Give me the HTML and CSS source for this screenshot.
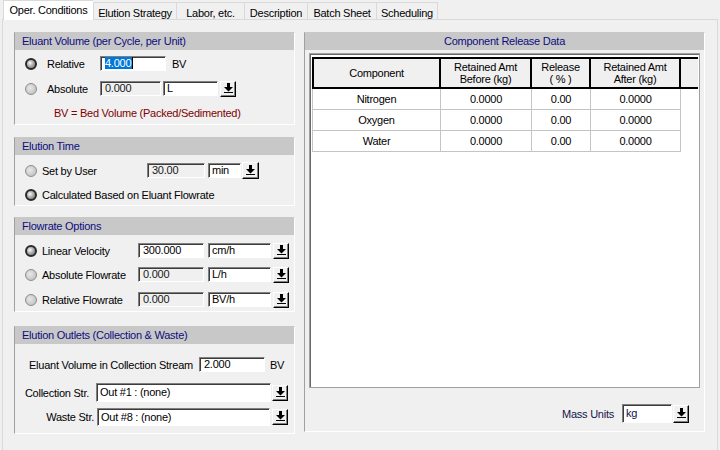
FILE: index.html
```html
<!DOCTYPE html>
<html>
<head>
<meta charset="utf-8">
<link rel="stylesheet" href="styles.css">
</head>
<body>
<div class="tabs">
  <div class="tab active t0">Oper. Conditions</div>
  <div class="tab first t1">Elution Strategy</div>
  <div class="tab t2">Labor, etc.</div>
  <div class="tab t3">Description</div>
  <div class="tab t4">Batch Sheet</div>
  <div class="tab t5">Scheduling</div>
</div>
<div class="page">
  <div class="leftcol">
    <section class="panel p1">
      <div class="ph">Eluant Volume (per Cycle, per Unit)</div>
      <div class="row p1r1">
        <span class="radio on"></span><span class="lbl l1">Relative</span>
        <span class="tb w66"><span class="hl">4.000</span></span><span class="unit">BV</span>
      </div>
      <div class="row p1r2">
        <span class="radio"></span><span class="lbl l1">Absolute</span>
        <span class="tb dis w61">0.000</span><span class="cb w55 m2">L</span>
        <span class="btn m2"><svg viewBox="0 0 9 10" width="9" height="10"><path d="M3 0h3v4h3L4.5 8.5 0 4h3z"/><rect x="0" y="9" width="9" height="1.2"/></svg></span>
      </div>
      <div class="note">BV = Bed Volume (Packed/Sedimented)</div>
    </section>

    <section class="panel p2">
      <div class="ph">Elution Time</div>
      <div class="row p2r1">
        <span class="radio"></span><span class="lbl l2">Set by User</span>
        <span class="tb dis w58">30.00</span><span class="cb w33 m3">min</span>
        <span class="btn b17 m1"><svg viewBox="0 0 9 10" width="9" height="10"><path d="M3 0h3v4h3L4.5 8.5 0 4h3z"/><rect x="0" y="9" width="9" height="1.2"/></svg></span>
      </div>
      <div class="row p2r2">
        <span class="radio on"></span><span class="lbl l2b">Calculated Based on Eluant Flowrate</span>
      </div>
    </section>

    <section class="panel p3">
      <div class="ph">Flowrate Options</div>
      <div class="row p3r1">
        <span class="radio on"></span><span class="lbl l3">Linear Velocity</span>
        <span class="tb w66">300.000</span><span class="cb w63 m4">cm/h</span>
        <span class="btn m2"><svg viewBox="0 0 9 10" width="9" height="10"><path d="M3 0h3v4h3L4.5 8.5 0 4h3z"/><rect x="0" y="9" width="9" height="1.2"/></svg></span>
      </div>
      <div class="row p3r2">
        <span class="radio"></span><span class="lbl l3">Absolute Flowrate</span>
        <span class="tb dis w66">0.000</span><span class="cb w63 m4">L/h</span>
        <span class="btn m2"><svg viewBox="0 0 9 10" width="9" height="10"><path d="M3 0h3v4h3L4.5 8.5 0 4h3z"/><rect x="0" y="9" width="9" height="1.2"/></svg></span>
      </div>
      <div class="row p3r3">
        <span class="radio"></span><span class="lbl l3">Relative Flowrate</span>
        <span class="tb dis w66">0.000</span><span class="cb w63 m4">BV/h</span>
        <span class="btn m2"><svg viewBox="0 0 9 10" width="9" height="10"><path d="M3 0h3v4h3L4.5 8.5 0 4h3z"/><rect x="0" y="9" width="9" height="1.2"/></svg></span>
      </div>
    </section>

    <section class="panel p4">
      <div class="ph">Elution Outlets (Collection &amp; Waste)</div>
      <div class="row p4r1">
        <span class="lbl l4">Eluant Volume in Collection Stream</span>
        <span class="tb w66">2.000</span><span class="unit u5">BV</span>
      </div>
      <div class="row p4r2">
        <span class="lbl l5">Collection Str.</span>
        <span class="cb tall w175">Out #1 : (none)</span>
        <span class="btn m1"><svg viewBox="0 0 9 10" width="9" height="10"><path d="M3 0h3v4h3L4.5 8.5 0 4h3z"/><rect x="0" y="9" width="9" height="1.2"/></svg></span>
      </div>
      <div class="row p4r3">
        <span class="lbl l6">Waste Str.</span>
        <span class="cb tall2 w173">Out #8 : (none)</span>
        <span class="btn m2"><svg viewBox="0 0 9 10" width="9" height="10"><path d="M3 0h3v4h3L4.5 8.5 0 4h3z"/><rect x="0" y="9" width="9" height="1.2"/></svg></span>
      </div>
    </section>
  </div>

  <section class="panel rp">
    <div class="ph center">Component Release Data</div>
    <div class="gridbox">
      <table class="grid">
        <colgroup><col class="c1"><col class="c2"><col class="c3"><col class="c4"><col class="c5"></colgroup>
        <thead>
          <tr>
            <th class="first">Component</th>
            <th>Retained Amt<br>Before (kg)</th>
            <th>Release<br>( % )</th>
            <th>Retained Amt<br>After (kg)</th>
            <th class="x"></th>
          </tr>
        </thead>
        <tbody>
          <tr><td class="first">Nitrogen</td><td>0.0000</td><td>0.00</td><td>0.0000</td><td class="x"></td></tr>
          <tr><td class="first">Oxygen</td><td>0.0000</td><td>0.00</td><td>0.0000</td><td class="x"></td></tr>
          <tr><td class="first">Water</td><td>0.0000</td><td>0.00</td><td>0.0000</td><td class="x"></td></tr>
        </tbody>
      </table>
    </div>
    <div class="massrow">
      <span class="mlbl">Mass Units</span>
      <span class="cb tall w50 kg">kg</span>
      <span class="btn bm m1"><svg viewBox="0 0 9 10" width="9" height="10"><path d="M3 0h3v4h3L4.5 8.5 0 4h3z"/><rect x="0" y="9" width="9" height="1.2"/></svg></span>
    </div>
  </section>
</div>
</body>
</html>
```

FILE: styles.css
```css
* { box-sizing: border-box; }

body {
  margin: 0;
  width: 720px;
  height: 450px;
  overflow: hidden;
  background: #f0f0f0;
  font-family: "Liberation Sans", Arial, sans-serif;
  font-size: 11px;
  letter-spacing: -0.25px;
  color: #000;
}

/* ---------- tabs ---------- */
.tabs {
  display: flex;
  align-items: flex-end;
  height: 19px;
  padding-left: 3px;
  position: relative;
  z-index: 1;
}
.tab {
  height: 17px;
  border-top: 1px solid #d9d9d9;
  border-right: 1px solid #d9d9d9;
  background: #f0f0f0;
  display: flex;
  justify-content: center;
  align-items: center;
  padding-top: 3px;
  white-space: nowrap;
}
.tab.active {
  align-self: flex-start;
  height: 20px;
  margin-bottom: -1px;
  background: #fff;
  border-left: 1px solid #d9d9d9;
  border-right: none;
  padding-top: 0;
  padding-bottom: 1px;
}
.tab.first { border-left: 1px solid #d9d9d9; }
.t0 { width: 90px; }
.t1 { width: 84px; }
.t2 { width: 68px; }
.t3 { width: 63px; }
.t4 { width: 69px; }
.t5 { width: 61px; }

/* ---------- page ---------- */
.page {
  margin-left: 2px;
  width: 716px;
  height: 431px;
  border: 1px solid #d9d9d9;
  border-bottom: none;
  padding: 12px 0 0 11px;
  display: flex;
  align-items: flex-start;
  gap: 9px;
}
.leftcol {
  width: 281px;
  display: flex;
  flex-direction: column;
}

.panel {
  border: 1px solid;
  border-color: #c8c8c8 #fff #fff #a0a0a0;
}
.p1 { height: 93px; }
.p2 { height: 69px; margin-top: 12px; }
.p3 { height: 95px; margin-top: 11px; }
.p4 { height: 108px; margin-top: 14px; }

.ph {
  height: 17px;
  line-height: 17px;
  background: #c8c8c8;
  color: #0c0c80;
  padding-left: 7px;
  white-space: nowrap;
}
.ph.center { text-align: center; padding-left: 0; }

.row {
  display: flex;
  align-items: center;
  height: 17px;
  padding-left: 10px;
  white-space: nowrap;
}
.p1r1 { margin-top: 5px; }
.p1r2 { margin-top: 8px; }
.p2r1 { margin-top: 7px; }
.p2r2 { margin-top: 7px; }
.p3r1 { margin-top: 7px; }
.p3r2 { margin-top: 7px; }
.p3r3 { margin-top: 8px; }
.p4r1 { margin-top: 12px; padding-left: 14px; }
.p4r2 { margin-top: 10px; height: 19px; padding-left: 0; }
.p4r3 { margin-top: 5px; height: 19px; padding-left: 0; }

.note {
  margin-top: 9px;
  height: 14px;
  line-height: 14px;
  padding-left: 39px;
  color: #800000;
  white-space: nowrap;
}

/* radio */
.radio {
  width: 12px;
  height: 12px;
  flex: none;
  border-radius: 50%;
  border: 1px solid #8c8c8c;
  background: radial-gradient(circle at 40% 40%, #e8e8e8 0, #c6c6c6 70%);
}
.radio.on {
  border: 2px solid #2a2a2a;
  background: radial-gradient(circle at 38% 38%, #ffffff 0, #c8c8c8 2px, #8c8c8c 5px);
}

/* labels */
.lbl { flex: none; }
.l1 { margin-left: 10px; width: 53px; }
.l2 { margin-left: 5px; width: 105px; }
.l2b { margin-left: 5px; }
.l3 { margin-left: 5px; width: 96px; }
.l4 { width: 170px; }
.l5 { width: 81px; text-align: right; padding-right: 7px; }
.l6 { width: 82px; text-align: right; padding-right: 3px; }

.unit { margin-left: 6px; }
.u5 { margin-left: 5px; }

/* text boxes & combos */
.tb, .cb {
  flex: none;
  height: 15px;
  line-height: 13px;
  background: #fff;
  border: 1px solid;
  border-color: #808080 #fff #fff #808080;
  box-shadow: inset 1px 1px 0 #3c3c3c;
  overflow: hidden;
  white-space: nowrap;
}
.tb { padding-left: 4px; }
.cb { padding-left: 3px; }
.tb.dis { background: #f0f0f0; color: #1a1a1a; }
.cb.tall { height: 19px; line-height: 17px; }
.cb.tall2 { height: 18px; line-height: 16px; }

.hl {
  display: inline-block;
  background: #0078d7;
  color: #fff;
  line-height: 12px;
  height: 12px;
  padding-right: 1px;
  border-right: 1px solid #000;
  vertical-align: middle;
  margin-top: -2px;
}

.w33 { width: 33px; }
.w50 { width: 50px; }
.w55 { width: 55px; }
.w58 { width: 58px; }
.w61 { width: 61px; }
.w63 { width: 63px; }
.w66 { width: 66px; }
.w173 { width: 173px; }
.w175 { width: 175px; }

.m1 { margin-left: 1px; }
.m2 { margin-left: 2px; }
.m3 { margin-left: 3px; }
.m4 { margin-left: 4px; }

/* dropdown button */
.btn {
  flex: none;
  width: 16px;
  height: 16px;
  background: #f0f0f0;
  border: 1px solid;
  border-color: #fff #000 #000 #fff;
  box-shadow: inset -1px -1px 0 #808080;
  display: flex;
  align-items: center;
  justify-content: center;
  padding-bottom: 1px;
}
.btn.b17 { width: 17px; height: 17px; }
.btn.bm { height: 18px; }
.btn svg { fill: #000; display: block; }

/* ---------- right panel ---------- */
.rp {
  width: 401px;
  height: 400px;
}
.gridbox {
  margin: 3px 4px 0 4px;
  height: 335px;
  background: #fff;
  border: 1px solid #a0a0a0;
  box-shadow: inset 1px 1px 0 #696969;
  padding: 3px 0 0 2px;
}
.grid {
  border-collapse: separate;
  border-spacing: 0;
  table-layout: fixed;
  width: 386px;
}
.c1 { width: 129px; }
.c2 { width: 91px; }
.c3 { width: 59px; }
.c4 { width: 90px; }
.c5 { width: 17px; }

.grid th {
  height: 32px;
  background: #f0f0f0;
  font-weight: normal;
  line-height: 12px;
  border-top: 2px solid #000;
  border-bottom: 2px solid #000;
  border-right: 2px solid #000;
  padding: 0;
  text-align: center;
  vertical-align: middle;
}
.grid th.first { border-left: 2px solid #000; }
.grid th.x { border-right: none; }

.grid td {
  height: 21px;
  padding: 0;
  text-align: center;
  vertical-align: middle;
  border-right: 1px solid #c4c4c4;
  border-bottom: 1px solid #c4c4c4;
}
.grid td.first { border-left: 1px solid #c4c4c4; }
.grid td.x { border: none; }

.massrow {
  margin-top: 16px;
  display: flex;
  justify-content: flex-end;
  align-items: center;
  padding-right: 15px;
  height: 19px;
}
.mlbl { color: #14144a; margin-right: 8px; }
.kg { color: #10104a; }
```
